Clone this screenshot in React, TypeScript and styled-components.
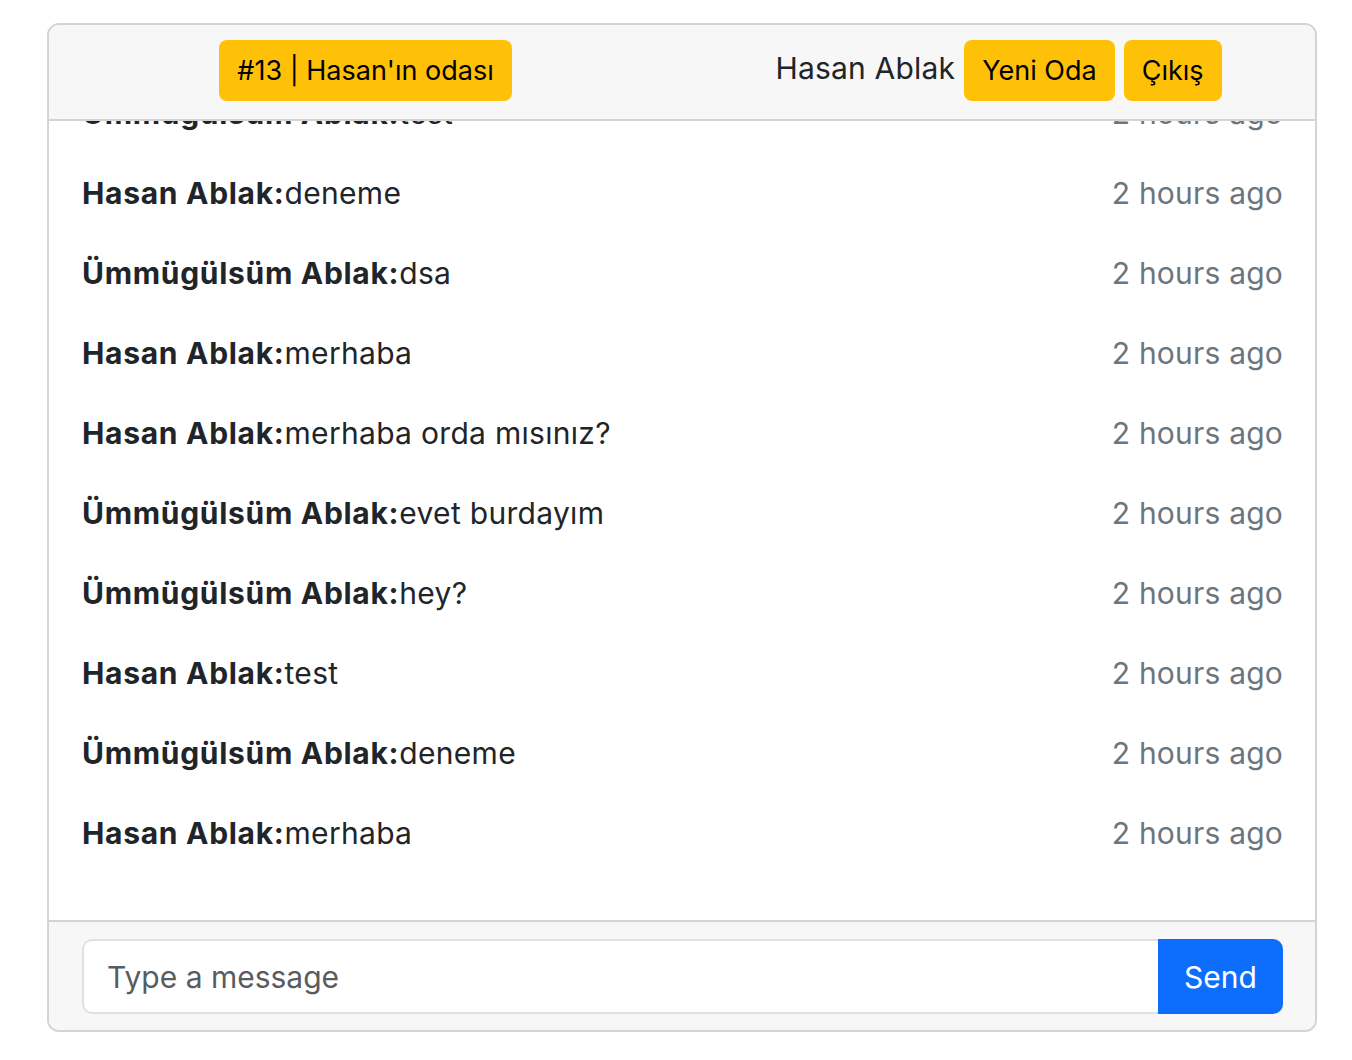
import React, { useLayoutEffect, useRef } from "react";
import styled, { createGlobalStyle } from "styled-components";

const Global = createGlobalStyle`
  html, body { margin: 0; padding: 0; background: #fff; }
  body { font-family: Inter, "Noto Sans", "Liberation Sans", sans-serif; color: #212529; }
  * { box-sizing: border-box; }
`;

const Page = styled.div`
  padding: 23px 36px 0 47px;
`;

const Card = styled.div`
  width: 1270px;
  height: 1009px;
  border: 2px solid #d4d4d4;
  border-radius: 12px;
  overflow: hidden;
  display: flex;
  flex-direction: column;
`;

const Header = styled.div`
  background: #f7f7f7;
  border-bottom: 2px solid #d4d4d4;
  height: 96px;
  flex-shrink: 0;
  display: grid;
  grid-template-columns: 1fr 1fr;
  align-items: center;
  padding: 0 0 3px 0;
`;

const HeaderCol = styled.div`
  display: flex;
  align-items: center;
  justify-content: center;
  gap: 9px;
`;

const UserName = styled.span`
  font-size: 30px;
  color: #212529;
  margin-top: -6px;
  letter-spacing: 0.2px;
`;

const YellowButton = styled.button`
  background: #ffc107;
  border: none;
  border-radius: 8px;
  height: 61px;
  padding: 0 18px;
  font-family: inherit;
  font-size: 27px;
  color: #000;
  cursor: pointer;
`;

const Body = styled.div`
  flex: 1;
  overflow-y: auto;
  scrollbar-width: none;
  padding: 0 32px 47px 33px;
  &::-webkit-scrollbar { display: none; }
`;

const Row = styled.div`
  height: 80px;
  display: flex;
  align-items: center;
  justify-content: space-between;
  font-size: 30px;
`;

const Msg = styled.div`
  color: #212529;
  letter-spacing: 0.3px;
`;

const Author = styled.b`
  font-weight: 700;
  letter-spacing: 0.7px;
`;

const Time = styled.div`
  color: #6c757d;
  letter-spacing: 0.2px;
`;

const Footer = styled.div`
  background: #f7f7f7;
  border-top: 2px solid #d4d4d4;
  flex-shrink: 0;
  padding: 17px 32px 16px 33px;
`;

const InputGroup = styled.div`
  display: flex;
  height: 75px;
`;

const Input = styled.input`
  flex: 1;
  border: 2px solid #dee2e6;
  border-right: none;
  border-radius: 10px 0 0 10px;
  padding: 0 23px;
  font-family: inherit;
  font-size: 30px;
  color: #212529;
  background: #fff;
  outline: none;
  &::placeholder { color: #595c5f; }
`;

const SendButton = styled.button`
  width: 125px;
  background: #0d6efd;
  border: none;
  border-radius: 0 10px 10px 0;
  color: #fff;
  font-family: inherit;
  font-size: 30px;
  cursor: pointer;
`;

const messages = [
  { a: "Hasan Ablak", m: "merhaba" },
  { a: "Ümmügülsüm Ablak", m: "selam" },
  { a: "Ümmügülsüm Ablak", m: "test" },
  { a: "Hasan Ablak", m: "deneme" },
  { a: "Ümmügülsüm Ablak", m: "dsa" },
  { a: "Hasan Ablak", m: "merhaba" },
  { a: "Hasan Ablak", m: "merhaba orda mısınız?" },
  { a: "Ümmügülsüm Ablak", m: "evet burdayım" },
  { a: "Ümmügülsüm Ablak", m: "hey?" },
  { a: "Hasan Ablak", m: "test" },
  { a: "Ümmügülsüm Ablak", m: "deneme" },
  { a: "Hasan Ablak", m: "merhaba" },
];

export default function App() {
  const bodyRef = useRef<HTMLDivElement>(null);
  useLayoutEffect(() => {
    if (bodyRef.current) bodyRef.current.scrollTop = bodyRef.current.scrollHeight;
  }, []);
  return (
    <Page>
      <Global />
      <Card>
        <Header>
          <HeaderCol>
            <YellowButton>#13 | Hasan'ın odası</YellowButton>
          </HeaderCol>
          <HeaderCol>
            <UserName>Hasan Ablak</UserName>
            <YellowButton>Yeni Oda</YellowButton>
            <YellowButton>Çıkış</YellowButton>
          </HeaderCol>
        </Header>
        <Body ref={bodyRef}>
          {messages.map((x, i) => (
            <Row key={i}>
              <Msg>
                <Author>{x.a}:</Author>
                {x.m}
              </Msg>
              <Time>2 hours ago</Time>
            </Row>
          ))}
        </Body>
        <Footer>
          <InputGroup>
            <Input placeholder="Type a message" />
            <SendButton>Send</SendButton>
          </InputGroup>
        </Footer>
      </Card>
    </Page>
  );
}
